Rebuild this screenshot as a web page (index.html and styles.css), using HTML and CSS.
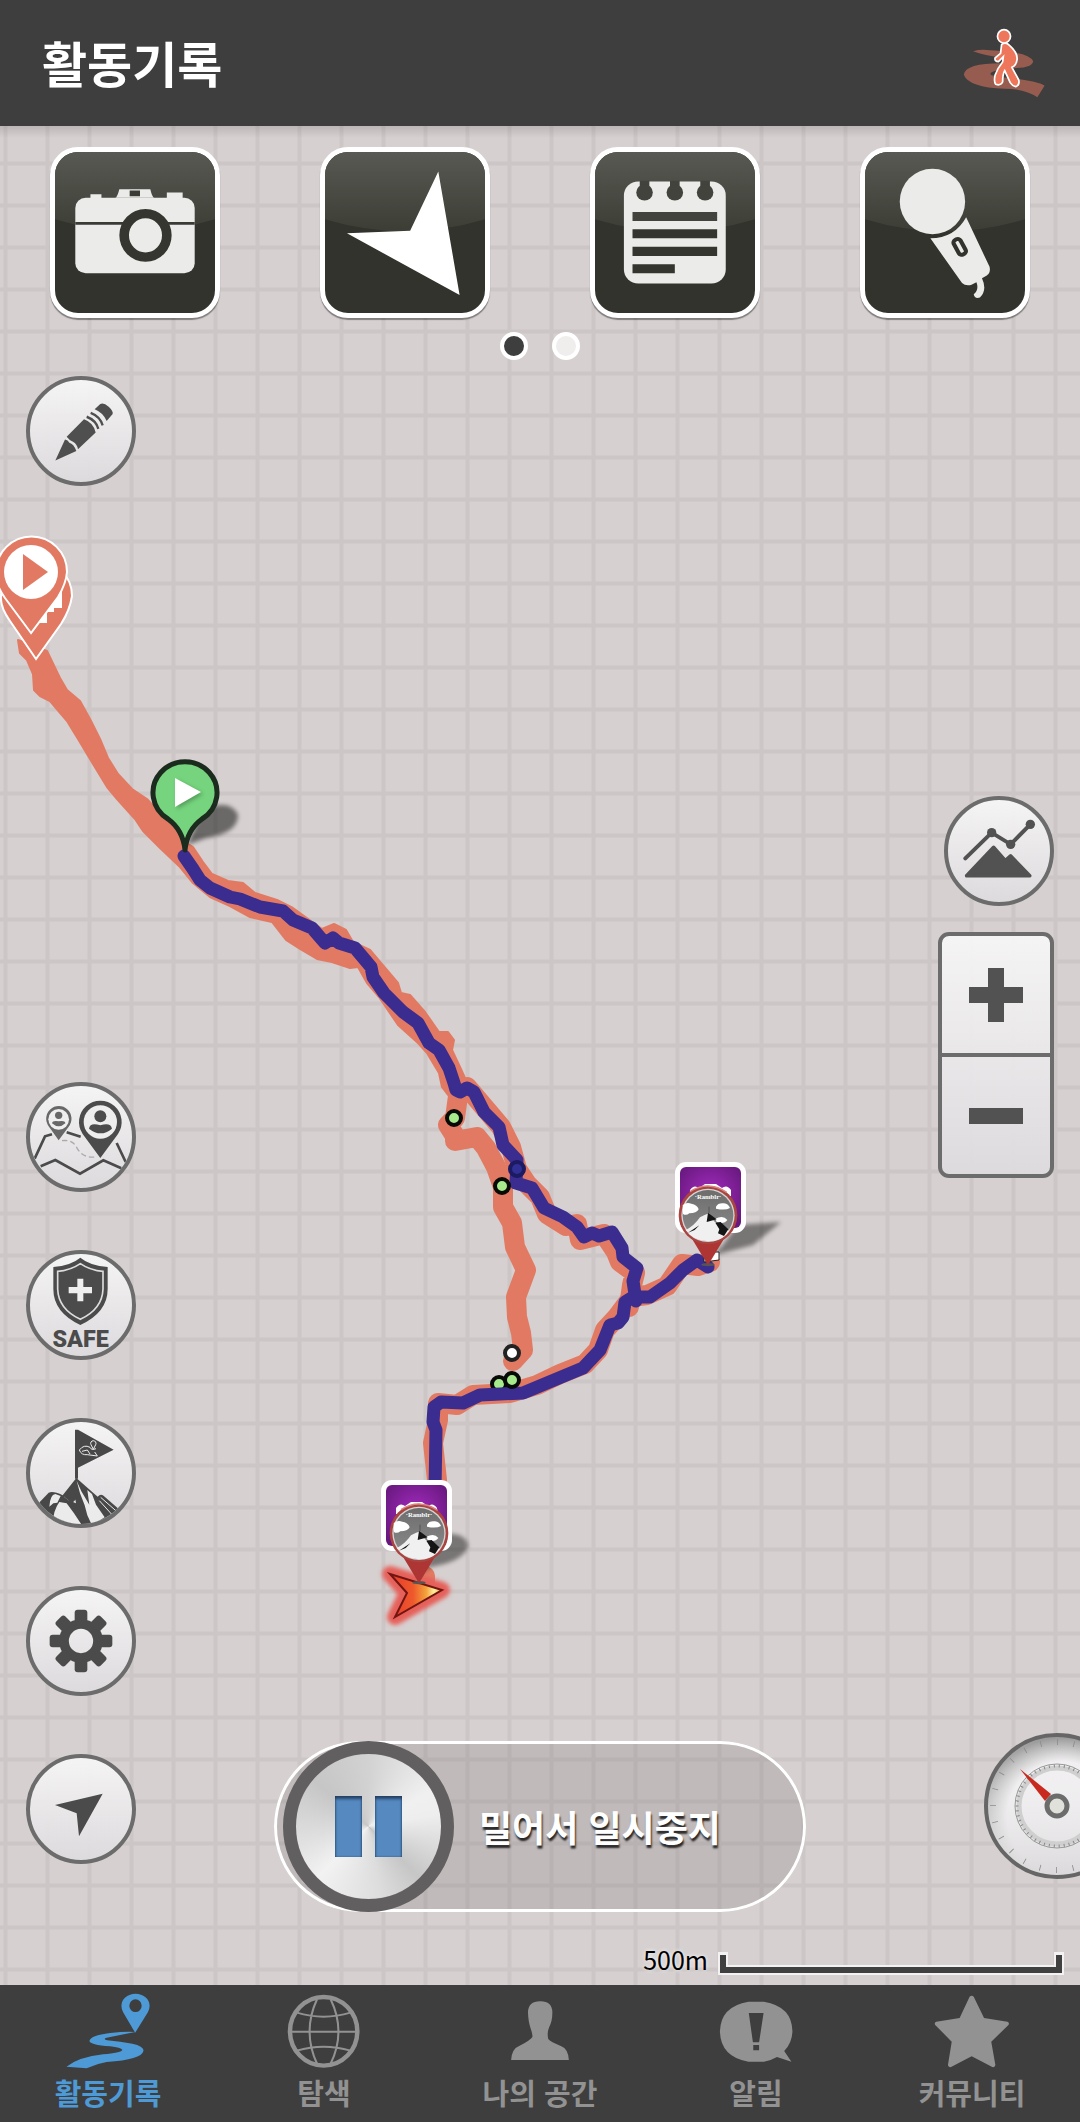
FILE: index.html
```
<!DOCTYPE html>
<html lang="ko">
<head>
    <meta charset="UTF-8">
    <meta name="viewport" content="width=device-width, initial-scale=1.0">
    <title>활동기록</title>
    <link rel="stylesheet" href="styles.css">
</head>
<body>
    <header class="header">
        <h1>활동기록</h1>
        <button class="activity-button" type="button" aria-label="걷기">
            <svg viewBox="1220 75 256 225" preserveAspectRatio="none">
                <path fill="#955c4f" d="M1258 154Q1280 147 1308 151Q1420 155 1433 184Q1430 203 1385 204L1330 210Q1300 218 1312 226L1340 232Q1440 240 1466 257L1445 292Q1410 266 1350 266Q1245 262 1231 224Q1236 190 1340 190L1345 174Q1290 166 1258 154Z"/>
                <g fill="#ed765b" stroke="#fff" stroke-width="5">
                    <path d="M1341 134Q1352 124 1364 136Q1388 158 1386 178Q1384 196 1371 202L1391 240Q1394 256 1382 260Q1372 258 1366 248L1350 212Q1344 222 1344 246Q1338 258 1324 253Q1318 246 1322 226Q1328 206 1344 186L1346 170L1332 185Q1320 184 1322 174L1338 160Z"/>
                    <ellipse cx="1348" cy="109" rx="19" ry="20"/>
                </g>
            </svg>
        </button>
    </header>

    <main class="map">
        <svg class="map-canvas" viewBox="0 126 1080 1859" preserveAspectRatio="xMidYMid slice">
            <defs>
                <filter id="soft" x="-30%" y="-30%" width="160%" height="160%"><feGaussianBlur stdDeviation="2"/></filter>
                <radialGradient id="purple" cx="50%" cy="45%" r="65%">
                    <stop offset="0" stop-color="#a42bc0"/><stop offset="1" stop-color="#66187c"/>
                </radialGradient>
                <linearGradient id="steel" x1="0" y1="0" x2="0" y2="1">
                    <stop offset="0" stop-color="#6d6d6d"/><stop offset="1" stop-color="#8d8d8d"/>
                </linearGradient>
                <linearGradient id="fire" x1="0" y1="0" x2="1" y2="0">
                    <stop offset="0" stop-color="#e8392c"/><stop offset=".45" stop-color="#ee5a2c"/>
                    <stop offset=".7" stop-color="#f4a43c"/><stop offset=".85" stop-color="#fff0a0"/><stop offset="1" stop-color="#f0a030"/>
                </linearGradient>
                <symbol id="photo-card" viewBox="0 0 71 71">
                    <rect width="71" height="71" rx="11" fill="#fff"/>
                    <rect x="5" y="5" width="61" height="61" rx="6" fill="url(#purple)"/>
                    <path d="M15 28q4-6 9-2l6-4h11l6 4q5-4 9 2v6H15z" fill="#fff"/>
                </symbol>
                <symbol id="summit-pin" viewBox="954 195 180 246">
                    <ellipse cx="1044" cy="434" rx="20" ry="5" fill="#555"/>
                    <path d="M956 290L1044 436L1132 290Z" fill="#ad3533"/>
                    <circle cx="1044" cy="285" r="88" fill="#a94440"/>
                    <path d="M990 215Q1044 180 1100 217" fill="none" stroke="#d98482" stroke-width="5"/>
                    <circle cx="1044" cy="286" r="80" fill="#d5d5d5"/>
                    <circle cx="1044" cy="286" r="76" fill="url(#steel)"/>
                    <path d="M968 256Q978 246 994 251Q1012 254 1016 268Q1010 280 988 280Q978 288 969 282ZM1068 260Q1074 248 1092 250Q1106 252 1110 264Q1096 272 1068 266ZM1066 296Q1090 284 1102 300Q1092 314 1070 306Z" fill="#fff"/>
                    <path d="M977 330Q1002 318 1020 292Q1034 284 1047 280L1062 304L1108 334Q1086 364 1044 364Q1000 362 977 330Z" fill="#f0f0f0"/>
                    <path d="M1044 278L1070 298L1040 306ZM1066 308L1082 306L1105 328L1092 348L1074 340L1078 328ZM984 338L1018 316L1004 330Z" fill="#151515"/>
                    <path d="M1047 260V280" stroke="#444" stroke-width="2"/>
                    <text class="pin-text" x="1044" y="236" text-anchor="middle">·Ramblr·</text>
                </symbol>
            </defs>

            <!-- planned course -->
            <path fill="#e27a63" stroke="#e27a63" stroke-width="2" stroke-linejoin="round" d="M18 640L20 653L27 660L33 674L34 690L40 696L50 701L67 721L78 739L93 764L107 787L117 799L135 819L143 831L160 848L180 867L193 883L210 897L230 906L250 917L272 922L286 940L300 949L317 959L332 962L350 968L358 967L367 983L379 997L398 1025L418 1043L427 1053L439 1073L442 1087L448 1095L470 1090L465 1078L460 1067L452 1050L454 1040L448 1032L439 1032L425 1012L410 995L401 993L398 983L381 963L370 950L353 942L346 930L334 924L322 929L293 908L277 900L255 893L243 883L228 881L212 874L203 862L193 847L185 842L173 824L157 810L147 799L132 789L118 774L108 758L100 739L90 719L80 701L67 690L60 678L47 651Z"/>
            <g class="course">
                <path d="M458 1090L467 1087L484 1107L501 1127L511 1147L517 1169L527 1184L540 1197L547 1214L566 1226L577 1224L580 1240L604 1234L616 1252L620 1262L635 1273L632 1285L629 1307"/>
                <path d="M458 1096L455 1118L448 1125L455 1136V1141L477 1137L486 1148L496 1167L503 1187L503 1207L512 1223L515 1247L526 1270L516 1297L517 1317L521 1333L523 1350L513 1361"/>
                <path d="M710 1262L698 1266L682 1264L667 1286L647 1295L632 1297L617 1317L605 1330L598 1350L585 1364L560 1374L537 1385L510 1393L473 1395L457 1405L438 1403L438 1420L433 1443L437 1480M425 1576V1582"/>
            </g>
            <circle cx="499" cy="1384" r="7" fill="#a7ea8c" stroke="#080a08" stroke-width="4"/>

            <!-- recorded track -->
            <path class="track" d="M184 856L193 869L200 880L210 888L230 897L240 899L260 907L283 911L293 920L312 928L325 943L333 938L339 943L355 948L371 967L373 977L384 993L403 1012L418 1023L429 1043L439 1050L449 1068L454 1083L456 1090L460 1092L467 1088L474 1092L484 1112L499 1127L503 1145L517 1160L516 1183L532 1188L544 1208L563 1217L577 1227L584 1237L592 1233L599 1236L612 1232L622 1248L623 1257L637 1268L633 1281L636 1301M708 1267L697 1260L683 1270L670 1283L650 1297L633 1297L625 1302L623 1317L618 1323L610 1325L600 1350L583 1368L547 1383L523 1393L480 1395L463 1403L441 1402L434 1407L433 1422L436 1430L435 1490"/>

            <g fill="#a7ea8c" stroke="#080a08" stroke-width="4">
                <circle cx="454" cy="1118" r="7"/>
                <circle cx="502" cy="1186" r="7"/>
                <circle cx="512" cy="1380" r="7"/>
                <circle cx="512" cy="1353" r="7" fill="#fff" stroke="#222"/>
                <circle cx="517" cy="1169" r="7" fill="#2f2f94" stroke="#1b1a62"/>
            </g>

            <!-- course start and finish pins -->
            <g fill="#e27a63" stroke="#fff" stroke-width="2">
                <path d="M36 659L10 621Q0 607 1 596A35 35 0 0 1 72 596Q70 610 61 624Z"/>
                <path d="M62 580V608H54V612H47V623H36L31 600Z" fill="#fff" stroke="none"/>
                <path d="M31 633L5 598Q-5 584-4 572A35 35 0 0 1 67 572Q66 584 58 597Z"/>
                <circle cx="31" cy="572" r="27" fill="#fff" stroke="none"/>
                <path d="M23 554L48 572L23 590Z" stroke="none"/>
            </g>

            <!-- track start pin -->
            <path d="M187 845L203 810Q230 798 238 815Q238 833 206 838Z" fill="#00000080" filter="url(#soft)"/>
            <path d="M185 850Q183 830 168 819A32 31 0 1 1 202 819Q187 830 185 850Z" fill="#75d47d" stroke="#1b2b1e" stroke-width="5" stroke-linejoin="round"/>
            <path d="M177 780L203 794L177 809Z" fill="#0004" filter="url(#soft)"/>
            <path d="M175 778L201 792L175 807Z" fill="#fff"/>

            <!-- photo badges -->
            <path d="M715 1255L738 1225L781 1222L753 1245Z" fill="#00000070" filter="url(#soft)"/>
            <path d="M704 1262V1252H719V1260Z" fill="#fff" stroke="#222"/>
            <path d="M424 1574L440 1534Q468 1532 468 1547Q462 1562 430 1567Z" fill="#00000070" filter="url(#soft)"/>
            <use href="#photo-card" x="675" y="1162" width="71" height="71"/>
            <use href="#summit-pin" x="678" y="1185" width="60" height="82"/>
            <use href="#photo-card" x="381" y="1480" width="71" height="71"/>

            <!-- current position -->
            <path d="M390 1574L442 1590L395 1617L407 1593Z" fill="#e6605a" stroke="#e6605a" stroke-width="16" stroke-linejoin="round" filter="url(#soft)"/>
            <path d="M390 1574L442 1590L395 1617L407 1593Z" fill="url(#fire)" stroke="#701512" stroke-width="2"/>
            <use href="#summit-pin" x="389" y="1503" width="60" height="82"/>
        </svg>

        <div class="overlay">
            <div class="tools">
                <button class="tool" type="button" aria-label="사진">
                    <svg viewBox="160 457 465 481" preserveAspectRatio="none">
                        <defs>
                            <linearGradient id="shine" x1="0" y1="0" x2="0" y2="1">
                                <stop offset="0" stop-color="#585952"/><stop offset="1" stop-color="#3c3d35"/>
                            </linearGradient>
                        </defs>
                        <path fill="url(#shine)" d="M160 457H625V658Q392 730 160 658Z"/>
                        <g fill="#ebebea">
                            <rect x="219" y="594" width="347" height="225" rx="30"/>
                            <path d="M263 598V583H295V598ZM335 594Q341 592 347 568H437Q442 590 448 594ZM485 598V578H531V598Z"/>
                        </g>
                        <path fill="#3a3b34" d="M377 572H407V589H377ZM219 666H566V674H219Z"/>
                        <ellipse cx="423" cy="706" rx="62" ry="65" fill="#ebebea" stroke="#35362f" stroke-width="28"/>
                    </svg>
                </button>
                <button class="tool" type="button" aria-label="위치">
                    <svg viewBox="942 457 466 481" preserveAspectRatio="none">
                        <path fill="url(#shine)" d="M942 457H1408V658Q1175 730 942 658Z"/>
                        <path fill="#fff" d="M1272 515L1334 884L1006 700L1190 692Z"/>
                    </svg>
                </button>
                <button class="tool" type="button" aria-label="메모">
                    <svg viewBox="159 457 465 481" preserveAspectRatio="none">
                        <path fill="url(#shine)" d="M159 457H624V658Q392 730 159 658Z"/>
                        <rect x="243" y="545" width="296" height="305" rx="42" fill="#ebebea"/>
                        <g fill="#42433c">
                            <path d="M289 543H317V565H289ZM377 543H405V565H377ZM465 543H493V565H465Z"/>
                            <circle cx="303" cy="578" r="24"/>
                            <circle cx="391" cy="578" r="24"/>
                            <circle cx="479" cy="578" r="24"/>
                            <path d="M268 636H514V663H268Z"/>
                        </g>
                        <path fill="#34352e" d="M268 688H514V715H268ZM268 740H514V768H268ZM268 792H391V819H268Z"/>
                    </svg>
                </button>
                <button class="tool" type="button" aria-label="음성">
                    <svg viewBox="944 457 465 481" preserveAspectRatio="none">
                        <path fill="url(#shine)" d="M944 457H1409V658Q1176 730 944 658Z"/>
                        <g fill="#ebebea">
                            <ellipse cx="1140" cy="605" rx="95" ry="98"/>
                            <path d="M1134 715Q1204 715 1238 652L1306 800Q1310 818 1298 826L1284 834Q1300 870 1278 892Q1262 896 1260 882Q1276 870 1268 846L1252 854Q1236 858 1226 848Z"/>
                            <rect x="1208" y="716" width="22" height="49" rx="9" transform="rotate(-28 1219 740)" stroke="#32332c" stroke-width="12"/>
                        </g>
                    </svg>
                </button>
            </div>
            <div class="pager">
                <span class="dot active"></span>
                <span class="dot"></span>
            </div>

            <div class="controls">
                <div class="left-controls">
                    <button class="round" type="button" aria-label="그리기">
                        <svg viewBox="92 53 306 286" preserveAspectRatio="none" fill="#4f4f4f">
                            <path d="M168 279L197 220Q206 221 210 229Q223 232 231 252ZM202 212L254 163Q282 172 289 200L236 247Q233 232 221 226Q210 222 202 212ZM286 135L302 121Q312 115 328 128Q342 140 340 148L322 168Q312 145 286 135Z"/>
                            <path d="M262 156Q290 166 297 190M274 145Q302 155 310 180" fill="none" stroke="#4f4f4f" stroke-width="7"/>
                        </svg>
                    </button>
                    <div class="button-stack">
                        <button class="round" type="button" aria-label="친구 위치">
                            <svg viewBox="90 78 306 306">
                                <g fill="none" stroke="#4b4b4b" stroke-width="8">
                                    <path d="M104 296L135 229L156 223M200 217L242 230M350 249L377 306M122 319L166 300L240 341L310 301L364 325"/>
                                    <path d="M186 242Q220 238 232 266Q252 298 292 290" stroke="#aaa" stroke-width="4" stroke-dasharray="16 9"/>
                                </g>
                                <path d="M176 241L147 200A38 38 0 1 1 206 200Z" fill="#686868"/>
                                <circle cx="176" cy="178" r="31" fill="#f0eff0"/>
                                <circle cx="176" cy="166" r="11" fill="#686868"/>
                                <path d="M156 190Q158 180 176 184Q195 180 196 190Q176 208 156 190Z" fill="#686868"/>
                                <path d="M301 294L248 222A64 64 0 1 1 354 222Z" fill="#4b4b4b"/>
                                <circle cx="301" cy="186" r="50" fill="#eeedee"/>
                                <circle cx="301" cy="169" r="18" fill="#4b4b4b"/>
                                <path d="M267 206Q270 186 301 196Q332 186 336 206Q302 234 267 206Z" fill="#4b4b4b"/>
                            </svg>
                        </button>
                        <button class="round" type="button" aria-label="SAFE">
                            <svg viewBox="90 585 306 306">
                                <path d="M241 596Q270 620 323 624V690Q323 760 241 798Q160 760 160 690V624Q212 620 241 596Z" fill="#4b4b4b"/>
                                <path d="M241 614Q270 634 309 637V690Q307 750 241 781Q175 750 173 690V637Q212 634 241 614Z" fill="none" stroke="#dcdcdc" stroke-width="5"/>
                                <path d="M232 659H250V684H276V703H250V727H232V703H206V684H232Z" fill="#eee"/>
                                <text class="safe-text" x="242" y="864" text-anchor="middle">SAFE</text>
                            </svg>
                        </button>
                        <button class="round" type="button" aria-label="정상 인증">
                            <svg viewBox="90 1086 306 306">
                                <path d="M225 1109H234L341 1169L234 1223V1256H225Z" fill="#484848"/>
                                <path d="M110 1336L146 1298Q160 1292 188 1306L229 1254L293 1310Q303 1298 314 1310L364 1354L310 1390L240 1400H180Z" fill="#484848"/>
                                <path d="M148 1340Q150 1304 166 1302L182 1308L172 1328L160 1330ZM158 1392Q160 1350 178 1326L200 1330L222 1360L246 1396ZM192 1310L222 1296L228 1330L204 1320ZM230 1262L240 1300L254 1336L262 1366L276 1396L314 1372L288 1334L276 1302L262 1290L268 1334L244 1294Z" fill="#ecebec"/>
                                <path d="M192 1310L222 1266L228 1318L216 1330Z" fill="#484848"/>
                                <path d="M302 1312L352 1356M298 1322L338 1366" stroke="#ecebec" stroke-width="3"/>
                                <path d="M238 1170Q252 1152 270 1162Q274 1172 288 1166M238 1170Q244 1186 262 1184L292 1188L284 1176M246 1174L262 1170L270 1182M280 1168L273 1154A8 8 0 1 1 287 1154Z" fill="none" stroke="#eee" stroke-width="3"/>
                            </svg>
                        </button>
                        <button class="round" type="button" aria-label="설정">
                            <svg viewBox="90 149 306 306" fill="#4b4b4b">
                                <circle cx="243" cy="302" r="51" fill="none" stroke="#4b4b4b" stroke-width="29"/>
                                <rect x="224" y="208" width="38" height="40" rx="9"/>
                                <rect x="224" y="208" width="38" height="40" rx="9" transform="rotate(45 243 302)"/>
                                <rect x="224" y="208" width="38" height="40" rx="9" transform="rotate(90 243 302)"/>
                                <rect x="224" y="208" width="38" height="40" rx="9" transform="rotate(135 243 302)"/>
                                <rect x="224" y="208" width="38" height="40" rx="9" transform="rotate(180 243 302)"/>
                                <rect x="224" y="208" width="38" height="40" rx="9" transform="rotate(225 243 302)"/>
                                <rect x="224" y="208" width="38" height="40" rx="9" transform="rotate(270 243 302)"/>
                                <rect x="224" y="208" width="38" height="40" rx="9" transform="rotate(315 243 302)"/>
                            </svg>
                        </button>
                        <button class="round" type="button" aria-label="내 위치">
                            <svg viewBox="90 654 306 306">
                                <path d="M308 761L237 889L230 820L165 795Z" fill="#4b4b4b"/>
                            </svg>
                        </button>
                    </div>
                </div>

                <div class="slide-area">
                    <div class="slider">
                        <button class="knob" type="button" aria-label="일시중지">
                            <span class="bar"></span>
                            <span class="bar"></span>
                        </button>
                        <span class="slider-text">밀어서 일시중지</span>
                    </div>
                </div>

                <div class="right-controls">
                    <button class="round" type="button" aria-label="고도">
                        <svg viewBox="144 60 306 306" fill="#525252">
                            <path d="M196 235L275 158L332 193L391 133" fill="none" stroke="#525252" stroke-width="12" stroke-linecap="round"/>
                            <circle cx="275" cy="158" r="14"/>
                            <circle cx="332" cy="193" r="14"/>
                            <circle cx="391" cy="133" r="14"/>
                            <path d="M200 287L281 202L316 242L332 228L389 287Z" stroke="#525252" stroke-width="11" stroke-linejoin="round"/>
                        </svg>
                    </button>
                    <div class="zoom">
                        <button type="button" aria-label="확대">
                            <svg viewBox="0 0 54 54"><path d="M19 0H35V19H54V35H35V54H19V35H0V19H19Z" fill="#525252"/></svg>
                        </button>
                        <button type="button" aria-label="축소">
                            <svg viewBox="0 0 54 54"><path d="M0 19H54V35H0Z" fill="#525252"/></svg>
                        </button>
                    </div>
                    <button class="gauge" type="button" aria-label="계기판">
                        <svg viewBox="0 0 146 146">
                            <defs>
                                <radialGradient id="dial" cx="54%" cy="58%" r="56%">
                                    <stop offset=".7" stop-color="#efedef"/><stop offset="1" stop-color="#999"/>
                                </radialGradient>
                                <linearGradient id="dial-shade" x1="0" y1="0" x2="0" y2="1">
                                    <stop offset="0" stop-color="#fff" stop-opacity="0"/><stop offset="1" stop-color="#dad8da"/>
                                </linearGradient>
                            </defs>
                            <circle cx="73" cy="73" r="71" fill="url(#dial)"/>
                            <circle cx="73" cy="73" r="71" fill="url(#dial-shade)" stroke="#666" stroke-width="4"/>
                            <circle cx="73" cy="73" r="64" fill="none" stroke="#8c8c8c" stroke-width="6" pathLength="480" stroke-dasharray="1 19" stroke-dashoffset="0"/>
                            <circle cx="73" cy="73" r="38" fill="none" stroke="#cfcfcf" stroke-width="5"/>
                            <circle cx="73" cy="73" r="42" fill="none" stroke="#999" stroke-width="1"/>
                            <circle cx="73" cy="73" r="40" fill="none" stroke="#888" stroke-width="3" stroke-dasharray="1 4"/>
                            <path d="M36 36L67 61L61 68Z" fill="#c92a20"/>
                            <circle cx="73" cy="73" r="10" fill="#dfe1da" stroke="#6c6c6c" stroke-width="5"/>
                        </svg>
                    </button>
                </div>
            </div>

            <div class="scale">
                <span>500m</span>
                <svg class="scale-bar" viewBox="0 0 346 26" preserveAspectRatio="none">
                    <path d="M5 4V18H341V4" fill="none" stroke="#f3f1f1" stroke-width="10" stroke-linecap="square"/>
                    <path d="M5 3V18H341V3" fill="none" stroke="#404040" stroke-width="6"/>
                </svg>
            </div>
        </div>
    </main>

    <nav class="nav">
        <a class="active" href="#record">
            <svg viewBox="186 34 256 240" preserveAspectRatio="none">
                <path fill-rule="evenodd" d="M393 159L358 98Q353 88 353 78A41 36 0 0 1 435 78Q435 88 430 98ZM394 59A18 19 0 1 0 394 97A18 19 0 1 0 394 59Z"/>
                <path d="M393 157Q350 166 310 174Q298 178 312 182Q350 186 385 192Q420 200 417 214Q412 240 310 247Q280 252 252 266L193 261Q230 232 300 224Q350 220 356 211Q352 204 320 200Q262 196 260 184Q262 168 320 160Q370 154 393 157Z"/>
            </svg>
            활동기록
        </a>
        <a href="#explore">
            <svg viewBox="813 34 256 240" preserveAspectRatio="none">
                <g class="line">
                    <ellipse cx="940" cy="155" rx="98" ry="103" stroke-width="13"/>
                    <path d="M842 156H1038M862 99Q940 123 1018 99M862 213Q940 189 1018 213M921 58Q877 156 921 253M960 58Q1006 156 960 253" stroke-width="6"/>
                </g>
            </svg>
            탐색
        </a>
        <a href="#my">
            <svg viewBox="1440 34 256 240" preserveAspectRatio="none">
                <path d="M1568 65Q1603 64 1604 98Q1604 126 1594 144Q1588 160 1592 178Q1598 186 1630 200Q1650 208 1652 241H1484Q1486 208 1506 200Q1540 182 1546 172Q1546 160 1540 144Q1534 126 1533 98Q1534 65 1568 65Z"/>
            </svg>
            나의 공간
        </a>
        <a href="#alerts">
            <svg viewBox="499 34 256 240" preserveAspectRatio="none">
                <path fill-rule="evenodd" d="M605 66H650Q732 80 733 155Q732 190 709 214L730 246L688 232Q672 242 650 246H605Q524 232 522 155Q524 80 605 66ZM606 100L618 188H636L649 100ZM619 196V212H636V196Z"/>
            </svg>
            알림
        </a>
        <a href="#community">
            <svg viewBox="1127 34 256 240" preserveAspectRatio="none">
                <path d="M1248 51Q1254 46 1260 51L1290 115L1358 126Q1365 129 1361 136L1311 186L1323 256Q1322 264 1314 262L1254 230L1194 262Q1186 264 1185 256L1196 186L1148 136Q1144 129 1151 126L1219 115Z"/>
            </svg>
            커뮤니티
        </a>
    </nav>
</body>
</html>
```
FILE: styles.css
```
* {
    box-sizing: border-box;
}

body {
    margin: 0;
    min-height: 100vh;
    display: flex;
    flex-direction: column;
    font-family: "Noto Sans CJK KR", "Noto Sans", sans-serif;
    background-color: #3e3e3e;
}

button {
    padding: 0;
    border: none;
    background: none;
    cursor: pointer;
}

svg {
    display: block;
}

.header {
    height: 126px;
    padding: 0 32px 2px 42px;
    display: flex;
    align-items: center;
    justify-content: space-between;
    background-color: #3e3e3e;
    color: white;
}

.header h1 {
    margin: 0;
    font-size: 49px;
    line-height: 64px;
    font-weight: bold;
}

.activity-button svg {
    width: 88px;
    height: 75px;
}

/* map */
.map {
    position: relative;
    flex: 1;
    display: flex;
    overflow: hidden;
    background-color: #d6d0d0;
    background-image:
        linear-gradient(rgba(90, 80, 80, 0.2), transparent 12px),
        linear-gradient(90deg, transparent 3px, #ccc6c6 4px, #ccc6c6 7px, transparent 8px),
        linear-gradient(transparent 35px, #ccc6c6 36px, #ccc6c6 39px, transparent 40px);
    background-size: auto, 42px 42px, 42px 42px;
    background-repeat: no-repeat, repeat, repeat;
}

.map-canvas {
    position: absolute;
    top: 0;
    left: 0;
    width: 100%;
    height: 100%;
}

.course path {
    fill: none;
    stroke: #e27a63;
    stroke-width: 20;
    stroke-linejoin: round;
    stroke-linecap: round;
}

.track {
    fill: none;
    stroke: #3b2c90;
    stroke-width: 13;
    stroke-linejoin: round;
    stroke-linecap: round;
}

.pin-text {
    font-family: "Liberation Serif", serif;
    font-weight: bold;
    font-size: 20px;
    fill: white;
}

.safe-text {
    font-family: "Liberation Sans Narrow", Roboto, sans-serif;
    font-weight: 900;
    font-size: 70px;
    fill: #4b4b4b;
}

.overlay {
    position: relative;
    flex: 1;
    display: flex;
    flex-direction: column;
    padding-top: 21px;
}

.tools {
    display: grid;
    grid-template-columns: repeat(4, 1fr);
    justify-items: center;
}

.tool {
    width: 170px;
    height: 171px;
    border: 5px solid white;
    border-radius: 28px;
    background-color: #32332c;
    box-shadow: 0 2px 1px rgba(0, 0, 0, 0.4);
    overflow: hidden;
}

.tool svg {
    width: 100%;
    height: 100%;
}

.pager {
    display: flex;
    justify-content: center;
    gap: 24px;
    padding: 14px 0 16px;
}

.dot {
    width: 28px;
    height: 28px;
    border: 4px solid white;
    border-radius: 50%;
    background-color: #efeeec;
}

.dot.active {
    background-color: #3e3e3e;
}

.controls {
    flex: 1;
    display: grid;
    grid-template-columns: 1fr auto 1fr;
}

.left-controls {
    display: flex;
    flex-direction: column;
    justify-content: space-between;
    padding: 0 0 74px 26px;
}

.button-stack {
    display: flex;
    flex-direction: column;
    gap: 58px;
}

.round {
    width: 110px;
    height: 110px;
    border: 4px solid #6c6c6c;
    border-radius: 50%;
    background-image: linear-gradient(rgba(247, 246, 247, 0.95), rgba(221, 219, 221, 0.95));
    overflow: hidden;
}

.round svg {
    width: 100%;
    height: 100%;
}

.slide-area {
    display: flex;
    align-items: flex-end;
    padding-bottom: 26px;
}

.slider {
    display: flex;
    align-items: center;
    gap: 25px;
    width: 532px;
    height: 171px;
    padding-left: 9px;
    border-radius: 86px;
    background-color: rgba(40, 30, 30, 0.12);
    box-shadow: inset 0 0 0 3px white;
}

.knob {
    width: 171px;
    height: 171px;
    display: flex;
    align-items: center;
    justify-content: center;
    gap: 13px;
    border: 13px solid #615f5f;
    border-radius: 50%;
    background: conic-gradient(#d2d2d2, #f0f0f0 60deg, #eeeeee 80deg, #c6c6c6 135deg, #dddddd 170deg, #f2f2f2 225deg, #e4e4e4 250deg, #c6c6c6 310deg, #d2d2d2) padding-box;
}

.bar {
    width: 27px;
    height: 61px;
    background-color: #5589c0;
    box-shadow: inset 0 3px 3px rgba(20, 40, 70, 0.7), inset 0 0 2px rgba(20, 40, 70, 0.6);
}

.slider-text {
    color: white;
    font-size: 36px;
    font-weight: bold;
    line-height: 52px;
    padding-bottom: 2px;
    text-shadow: 1px 3px 2px rgba(0, 0, 0, 0.8);
}

.right-controls {
    display: flex;
    flex-direction: column;
    align-items: flex-end;
    padding: 420px 26px 59px 0;
}

.zoom {
    display: flex;
    flex-direction: column;
    width: 116px;
    height: 246px;
    margin-top: 26px;
    border: 4px solid #6c6c6c;
    border-radius: 11px;
    background-image: linear-gradient(rgba(247, 246, 247, 0.95), rgba(221, 219, 221, 0.95));
}

.zoom button {
    flex: 1;
    display: flex;
    align-items: center;
    justify-content: center;
}

.zoom button:first-child {
    border-bottom: 4px solid #6c6c6c;
}

.zoom svg {
    width: 54px;
    height: 54px;
}

.gauge {
    margin-top: auto;
    margin-right: -76px;
}

.gauge svg {
    width: 146px;
    height: 146px;
}

.scale {
    display: flex;
    justify-content: flex-end;
    align-items: center;
    gap: 10px;
    height: 47px;
    padding-right: 16px;
    font-size: 25px;
    line-height: 36px;
    color: black;
    text-shadow: 0 0 4px white;
}

.scale span {
    padding-bottom: 6px;
}

.scale-bar {
    width: 346px;
    height: 26px;
    margin-top: 6px;
}

/* bottom tabs */
.nav {
    display: grid;
    grid-template-columns: repeat(5, 1fr);
    padding: 6px 0 9px;
    background-color: #3e3e3e;
}

.nav a {
    display: flex;
    flex-direction: column;
    align-items: center;
    color: #929292;
    fill: #929292;
    font-size: 29px;
    line-height: 42px;
    font-weight: bold;
    text-decoration: none;
}

.nav a.active {
    color: #4e9ad6;
    fill: #4e9ad6;
}

.nav svg {
    width: 88px;
    height: 80px;
}

.nav .line {
    fill: none;
    stroke: #929292;
}
```
